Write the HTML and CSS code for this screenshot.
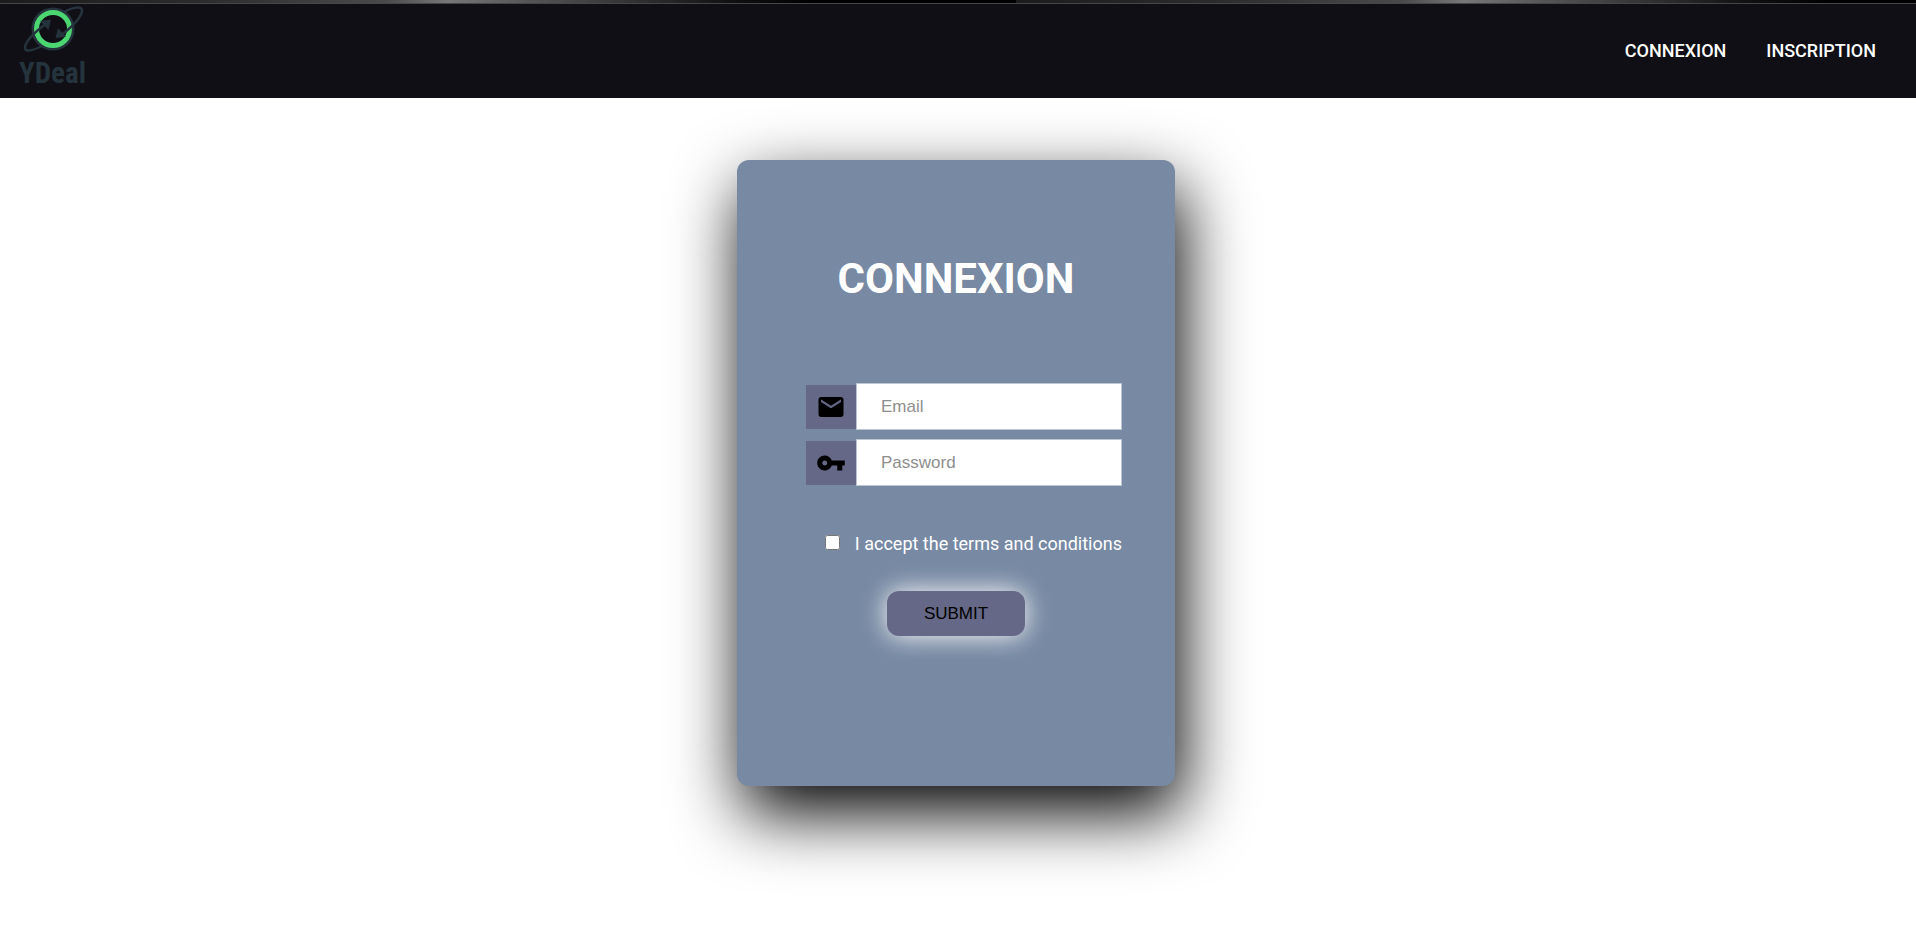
FILE: index.html
```html
<!DOCTYPE html>
<html lang="en">
<head>
<meta charset="utf-8">
<meta name="viewport" content="width=device-width, initial-scale=1">
<title>YDeal - Connexion</title>
<link rel="stylesheet" href="styles.css">
</head>
<body>
<header class="site-header">
  <a class="brand" href="#" aria-label="YDeal">
    <svg class="brand-mark" viewBox="0 0 66 46" aria-hidden="true">
      <circle cx="34" cy="23" r="20" fill="none" stroke="#25333d" stroke-width="3"/>
      <circle cx="34" cy="23" r="16.500" fill="none" stroke="#4bd671" stroke-width="5"/>
      <path d="M23 40 C13 45 6 46 6 42 C6 36 13 28 28 17 M45 6 C54 1 63 0 63 4 C63 11 53 21 41 30" fill="none" stroke="#25333d" stroke-width="2.500"/>
      <path d="M21 15 L32 13.500 L29.500 24 Z M39 22 L36.500 32 L47 31 Z" fill="#25333d"/>
    </svg>
    <span class="brand-name">YDeal</span>
  </a>
  <nav class="site-nav">
    <a href="#">CONNEXION</a>
    <a href="#">INSCRIPTION</a>
  </nav>
</header>
<main class="page">
  <form class="card">
    <h1 class="card-title">CONNEXION</h1>
    <div class="field">
      <label class="field-icon" for="email" aria-label="Email">
        <svg viewBox="0 0 24 24" aria-hidden="true"><path d="M20 4H4c-1.100 0-2 .9-2 2v12c0 1.100.9 2 2 2h16c1.100 0 2-.9 2-2V6c0-1.100-.9-2-2-2zm0 4l-8 5-8-5V6l8 5 8-5v2z"/></svg>
      </label>
      <input class="field-input" id="email" type="email" placeholder="Email">
    </div>
    <div class="field">
      <label class="field-icon" for="password" aria-label="Password">
        <svg viewBox="0 0 24 24" aria-hidden="true"><path d="M12.650 10C11.830 7.670 9.610 6 7 6c-3.310 0-6 2.690-6 6s2.690 6 6 6c2.610 0 4.830-1.670 5.650-4H17v4h4v-4h2v-4H12.650zM7 14c-1.100 0-2-.9-2-2s.9-2 2-2 2 .9 2 2-.9 2-2 2z"/></svg>
      </label>
      <input class="field-input" id="password" type="password" placeholder="Password">
    </div>
    <div class="terms">
      <input class="terms-box" id="terms" type="checkbox">
      <label for="terms">I accept the terms and conditions</label>
    </div>
    <button class="submit" type="submit">SUBMIT</button>
  </form>
</main>
</body>
</html>
```
FILE: styles.css
```css
* { box-sizing: border-box; }

body {
  display: flex;
  flex-direction: column;
  min-height: 100vh;
  margin: 0;
  background: #fff;
  color: #fff;
  font-family: Roboto, "Liberation Sans", sans-serif;
}

.site-header {
  display: flex;
  align-items: center;
  justify-content: space-between;
  height: 98px;
  padding: 4px 40px 0 19px;
  background:
    linear-gradient(#45454a, #45454a) 0 3px / 100% 1px no-repeat,
    linear-gradient(90deg, #1c1c1c 0, #2c2c2c 20%, #4a4a4a 38%, #777 44%, #555 52%, #333 62%, #111 72%, #000 80%) 0 0 / 1016px 3px repeat-x,
    #100f15;
}

.brand {
  display: flex;
  flex-direction: column;
  padding-bottom: 3px;
  color: #25333d;
  text-decoration: none;
}

.brand-mark { width: 66px; height: 46px; }

.brand-name {
  font: bold 29px/42px "Roboto Condensed", "Liberation Sans Narrow", Roboto, sans-serif;
}

.site-nav { display: flex; gap: 40px; padding-bottom: 2px; }

.site-nav a {
  color: #fff;
  font-size: 18px;
  font-weight: 500;
  text-decoration: none;
}

.page {
  display: flex;
  flex: 1;
  align-items: flex-start;
  justify-content: center;
  padding: 62px 4px 80px 0;
}

.card {
  display: flex;
  flex-direction: column;
  align-items: center;
  width: 438px;
  padding: 93px 53px 150px 69px;
  border-radius: 12px;
  background: #7789a3;
  box-shadow: 6px 27px 68px #000;
}

.card-title {
  margin: 0 16px 78px 0;
  font-size: 42px;
  font-weight: 700;
  line-height: 52px;
}

.field {
  display: flex;
  align-items: center;
  width: 100%;
  margin-bottom: 9px;
}

.field-icon {
  display: flex;
  align-items: center;
  justify-content: center;
  width: 50px;
  height: 44px;
  background: #666887;
}

.field-icon svg { width: 30px; height: 30px; }

.field-input {
  flex: 1;
  min-width: 0;
  height: 47px;
  padding: 0 24px;
  border: 1px solid #bcc6d3;
  background: #fff;
  font: 17px "Liberation Sans", Arial, sans-serif;
}

.field-input::placeholder { color: #8e8e8e; }

.terms {
  display: flex;
  align-items: center;
  align-self: flex-end;
  gap: 15px;
  margin: 37px 0 35px;
  font-size: 18px;
  line-height: 24px;
}

.terms-box { width: 15px; height: 15px; margin: 0 0 4px; }

.submit {
  width: 138px;
  height: 45px;
  margin-right: 16px;
  border: 0;
  border-radius: 12px;
  background: #666887;
  box-shadow: 0 0 26px #fff;
  color: #000;
  font: 17px "Liberation Sans", Arial, sans-serif;
}
```
